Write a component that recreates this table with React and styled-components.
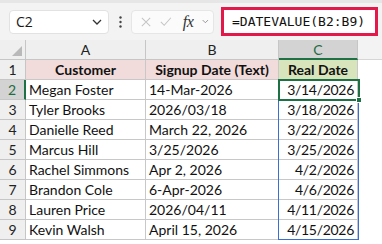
import React from 'react';
import styled, { createGlobalStyle } from 'styled-components';

const GlobalStyle = createGlobalStyle`
  html, body {
    margin: 0;
    padding: 0;
    background: #ffffff;
  }
  body {
    font-family: Lato, "Noto Sans", sans-serif;
    color: #111;
    width: 382px;
    height: 244px;
    overflow: hidden;
  }
`;

const Toolbar = styled.div`
  display: flex;
  align-items: center;
  height: 37px;
  border-top: 3px solid #e6e6e6;
  background: #f3f3f3;
  padding: 0 4px 0 9px;
`;

const NameBox = styled.div`
  display: flex;
  align-items: center;
  justify-content: space-between;
  box-sizing: border-box;
  width: 100px;
  height: 24px;
  padding: 0 6px 0 6px;
  background: #fff;
  border: 1px solid #e2e2e2;
  border-radius: 4px;
  font-family: "Open Sans", "Noto Sans", sans-serif;
  font-size: 14px;
  color: #1a1a1a;
`;

const Dots = styled.div`
  display: flex;
  justify-content: center;
  width: 22px;
`;

const ActionBox = styled.div`
  display: flex;
  align-items: center;
  box-sizing: border-box;
  width: 83px;
  height: 24px;
  padding: 0 4px 0 9px;
  gap: 9px;
  background: #fbfbfb;
  border: 1px solid #e6e6e6;
  border-radius: 4px;
`;

const Fx = styled.span`
  font-family: "Liberation Serif", serif;
  font-style: italic;
  font-size: 16px;
  color: #333;
  margin-left: 2px;
  letter-spacing: -0.5px;
`;

const FormulaBox = styled.div`
  display: flex;
  align-items: center;
  box-sizing: border-box;
  width: 157px;
  height: 29px;
  margin-left: 7px;
  margin-top: -1px;
  padding-left: 8px;
  background: #fff;
  border: 3px solid #e3194b;
  font-family: "DejaVu Sans Mono", monospace;
  font-size: 13px;
  color: #111;
`;

const Sheet = styled.div`
  position: relative;
  display: grid;
  grid-template-columns: 26px 120px 133px 79px 1fr;
  grid-auto-rows: 20px;
`;

const ColHead = styled.div`
  display: flex;
  align-items: center;
  justify-content: center;
  box-sizing: border-box;
  background: ${({ $active }) => ($active ? '#d3d3d3' : '#efefef')};
  color: ${({ $active }) => ($active ? '#1e6c41' : '#222')};
  border-right: 1px solid #c6c6c6;
  border-bottom: ${({ $active }) => ($active ? '2px solid #1e7145' : '1px solid #c6c6c6')};
  font-size: 14px;
`;

const Corner = styled.div`
  position: relative;
  box-sizing: border-box;
  background: #efefef;
  border-right: 1px solid #c6c6c6;
  border-bottom: 1px solid #c6c6c6;
`;

const CornerMark = styled.svg`
  position: absolute;
  right: 3px;
  bottom: 3px;
`;

const Filler = styled.div`
  background: ${({ $head }) => ($head ? '#f3f3f3' : '#fff')};
  border-bottom: ${({ $head }) => ($head ? '1px solid #d6d6d6' : 'none')};
`;

const RowNum = styled.div`
  display: flex;
  align-items: center;
  justify-content: center;
  box-sizing: border-box;
  background: ${({ $active }) => ($active ? '#d3d3d3' : '#efefef')};
  color: ${({ $active }) => ($active ? '#1e6c41' : '#222')};
  border-right: ${({ $active }) => ($active ? '2px solid #1e7145' : '1px solid #c6c6c6')};
  border-bottom: 1px solid #c6c6c6;
  font-size: 14px;
`;

const Cell = styled.div`
  display: flex;
  align-items: center;
  justify-content: ${({ $align }) => $align || 'flex-start'};
  box-sizing: border-box;
  padding: 0 3px;
  background: ${({ $bg }) => $bg || '#fff'};
  border-right: 1px solid #c8c8c8;
  border-bottom: 1px solid #c8c8c8;
  font-size: 14px;
  letter-spacing: ${({ $tight }) => ($tight ? '-0.3px' : '0')};
  font-weight: ${({ $bold }) => ($bold ? 700 : 400)};
  white-space: nowrap;
  overflow: hidden;
`;

const RangeBox = styled.div`
  position: absolute;
  left: 278px;
  top: 40px;
  width: 81px;
  height: 160px;
  box-sizing: border-box;
  border: 1px solid #3a6fd0;
  pointer-events: none;
`;

const ActiveBox = styled.div`
  position: absolute;
  left: 278px;
  top: 39px;
  width: 82px;
  height: 22px;
  box-sizing: border-box;
  border: 2px solid #1e7145;
  pointer-events: none;
`;

const FillHandle = styled.div`
  position: absolute;
  left: 356px;
  top: 57px;
  width: 6px;
  height: 6px;
  box-sizing: border-box;
  background: #1e7145;
  border: 1px solid #fff;
`;

const rows = [
  ['Megan Foster', '14-Mar-2026', '3/14/2026'],
  ['Tyler Brooks', '2026/03/18', '3/18/2026'],
  ['Danielle Reed', 'March 22, 2026', '3/22/2026'],
  ['Marcus Hill', '3/25/2026', '3/25/2026'],
  ['Rachel Simmons', 'Apr 2, 2026', '4/2/2026'],
  ['Brandon Cole', '6-Apr-2026', '4/6/2026'],
  ['Lauren Price', '2026/04/11', '4/11/2026'],
  ['Kevin Walsh', 'April 15, 2026', '4/15/2026'],
];

const Chevron = ({ color = '#333', size = 10 }) => (
  <svg width={size} height={size * 0.6} viewBox="0 0 10 6">
    <path d="M1 1 L5 5 L9 1" fill="none" stroke={color} strokeWidth="1.3" />
  </svg>
);

export default function App() {
  return (
    <>
      <GlobalStyle />
      <Toolbar>
        <NameBox>
          <span>C2</span>
          <Chevron />
        </NameBox>
        <Dots>
          <svg width="3" height="12" viewBox="0 0 3 12">
            <circle cx="1.5" cy="1.5" r="1.2" fill="#444" />
            <circle cx="1.5" cy="6" r="1.2" fill="#444" />
            <circle cx="1.5" cy="10.5" r="1.2" fill="#444" />
          </svg>
        </Dots>
        <ActionBox>
          <svg width="12" height="12" viewBox="0 0 12 12">
            <path d="M1 1 L11 11 M11 1 L1 11" stroke="#c4c4c4" strokeWidth="1.2" />
          </svg>
          <svg width="14" height="11" viewBox="0 0 14 11">
            <path d="M1 6 L5 10 L13 1" fill="none" stroke="#c4c4c4" strokeWidth="1.2" />
          </svg>
          <Fx>fx</Fx>
          <Chevron color="#888" size={8} />
        </ActionBox>
        <FormulaBox>=DATEVALUE(B2:B9)</FormulaBox>
      </Toolbar>
      <Sheet>
        <Corner>
          <CornerMark width="10" height="10" viewBox="0 0 10 10">
            <path d="M10 0 L10 10 L0 10 Z" fill="#b9b9b9" />
          </CornerMark>
        </Corner>
        <ColHead>A</ColHead>
        <ColHead>B</ColHead>
        <ColHead $active>C</ColHead>
        <Filler $head />

        <RowNum>1</RowNum>
        <Cell $bg="#f2dcdb" $bold $align="center">Customer</Cell>
        <Cell $bg="#f2dcdb" $bold $align="center">Signup Date (Text)</Cell>
        <Cell $bg="#d8e4bc" $bold $align="center">Real Date</Cell>
        <Filler />

        {rows.map(([name, text, date], i) => (
          <React.Fragment key={name}>
            <RowNum $active={i === 0}>{i + 2}</RowNum>
            <Cell>{name}</Cell>
            <Cell>{text}</Cell>
            <Cell $align="flex-end" $tight>{date}</Cell>
            <Filler />
          </React.Fragment>
        ))}

        <RangeBox />
        <ActiveBox />
        <FillHandle />
      </Sheet>
    </>
  );
}
